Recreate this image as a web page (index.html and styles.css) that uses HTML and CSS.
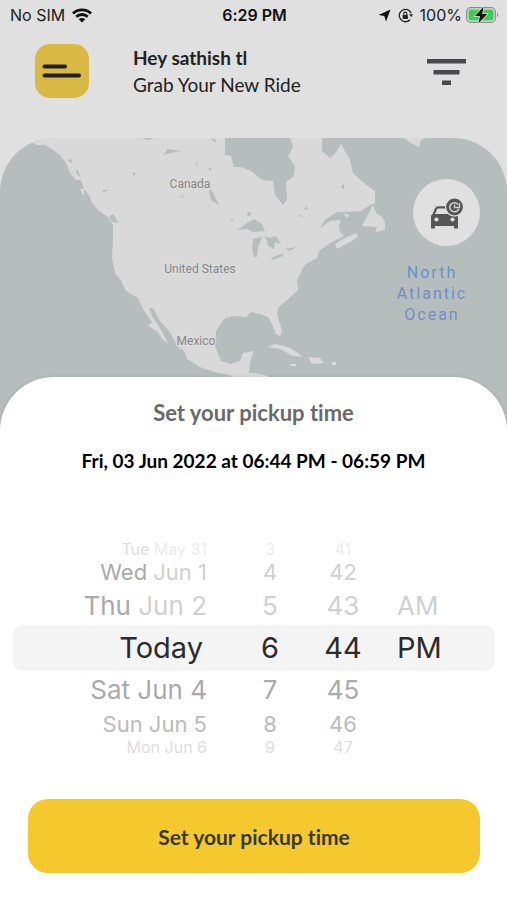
FILE: index.html
```html
<!DOCTYPE html>
<html lang="en">
<head>
    <meta charset="UTF-8">
    <meta name="viewport" content="width=device-width, initial-scale=1">
    <title>Set your pickup time</title>
    <link rel="stylesheet" href="styles.css">
</head>
<body>
<!-- status bar -->
<div class="status">
    <div class="status-left">
        <span>No SIM</span>
        <svg width="20" height="15" viewBox="0 0 20 15">
            <g fill="none" stroke="#111" stroke-width="2.8">
                <path d="M1 5.4C6 .6 14 .6 19 5.4"/>
                <path d="M4.2 8.8C7.500 5.700 12.500 5.700 15.800 8.800"/>
            </g>
            <path d="M6.700 11.200C8.500 9.500 11.500 9.500 13.300 11.200L10 14.500z" fill="#111"/>
        </svg>
    </div>
    <div class="status-time">6:29 PM</div>
    <div class="status-right">
        <svg width="13" height="13" viewBox="0 0 13 13"><path d="M12.500.5L8 12.500L6.300 6.900L.5 6z" fill="#111"/></svg>
        <svg class="lock" width="15" height="15" viewBox="0 0 15 15">
            <path d="M13.200 5.200A6.200 6.200 0 1 0 12 11.800" fill="none" stroke="#222" stroke-width="1.300"/>
            <path d="M11.200 6.300h3.800l-1.700 3z" fill="#222"/>
            <path d="M4.700 7h5.200v4H4.700z" fill="#222"/>
            <path d="M5.800 7V5.600a1.500 1.500 0 0 1 3 0V7" fill="none" stroke="#222" stroke-width="1.100"/>
        </svg>
        <span>100%</span>
        <svg class="battery" width="33" height="18" viewBox="0 0 33 18">
            <rect x=".7" y="1.700" width="28.600" height="14.600" rx="4" fill="none" stroke="#8b8b8b" stroke-width="1.200"/>
            <rect x="2.500" y="3.500" width="25" height="11" rx="2.500" fill="#3fcb5c"/>
            <path d="M31 6.500c1.600.7 1.600 4.300 0 5z" fill="#999"/>
            <path d="M17.500.8L9 10h5l-1.500 7.200L21.200 8h-5z" fill="#111" stroke="#e0e0e0" stroke-width="1.400" paint-order="stroke"/>
        </svg>
    </div>
</div>

<!-- header -->
<header class="header">
    <button type="button" class="menu-btn" aria-label="Menu">
        <svg width="40" height="14" viewBox="0 0 40 14">
            <path d="M2.500 2.500h20.500M2.500 11.500H37" stroke="#202020" stroke-width="4" stroke-linecap="round"/>
        </svg>
    </button>
    <div class="greeting">
        <h1>Hey sathish tl</h1>
        <p>Grab Your New Ride</p>
    </div>
    <button type="button" class="filter-btn" aria-label="Filter">
        <svg width="39" height="27" viewBox="0 0 39 27">
            <path d="M0 0h39v4.500H0zM6.500 11h26v4.500h-26zM15 21.500h9V26h-9z" fill="#48494d"/>
        </svg>
    </button>
</header>

<!-- map -->
<section class="map">
    <svg class="map-img" viewBox="0 138 507 292" preserveAspectRatio="xMidYMin slice">
        <g fill="#d9d9d9">
            <path d="M0 138H31V142L37 145L45 145L52 149L60 155L66 163L70 173L76 180L81 180L84 189L90 197L92 203L98 210L108 217L113 225L113 240L112 258L115 273L121 280L125 290L131 294L138 298L143 309L152 322L148 326L157 331L163 340L168 344L163 333L158 325L153 318L149 308L153 308L160 321L170 332L174 340L178 347L184 351L187 359L200 367L214 372L230 375L238 385L270 385L268 376L255 373L249 373L250 362L254 351L243 353L240 361L231 364L221 361L215 346L216 331L224 319L232 316L246 317L251 312L260 314L268 317L272 324L276 334L280 336L282 331L277 314L278 308L288 299L298 290L297 280L303 268L306 264L317 258L319 251L330 243L340 238L344 236L340 232L339 226L341 220L330 221L319 229L326 219L337 212L361 211L370 205L375 203L375 191L365 184L353 173L350 160L341 144L335 154L330 158L322 151L322 138H290L293 147L288 156L295 166L294 176L286 182L287 200L283 205L275 195L273 181L262 180L251 171L241 167L234 167L231 156L225 155V138z"/>
            <path d="M335 244L345 238L356 233L358 237L350 242L337 249z"/>
            <path d="M373 205L362 226L377 227L375 232L385 230L385 222L382 217L376 213z"/>
            <path d="M267 347L275 344L288 347L298 353L303 357L293 356L280 349zM308 357L320 358L324 363L312 364zM290 364h6v2h-6zM332 362h4v3h-4z"/>
            <path d="M404 138h22l-5 2l-2 7l-8-4zM67 160l6 0l5 11l3 4l-4 2zM80 189l4 0v8zM343 213l6 2l-2 3z"/>
        </g>
        <g fill="#b6bebd">
            <path d="M237 230L247 223L254 219L262 224L265 231L253 232L247 229z"/>
            <path d="M253 239L262 237L258 247L257 257L254 257L252 248zM264 236L270 238L276 236L281 244L275 242L274 249L268 246L267 240zM271 258L284 253L283 256L272 260zM284 249L296 247L290 251z"/>
            <path d="M163 155L168 149L181 151L171 153zM211 189L219 205L211 200L209 192zM207 202L213 212L210 208zM101 190h8l-5 2zM109 217l4-3l6 9l-7-1zM195 166l3-6l-1 6zM341 186l3-2v6zM181 197l3-3l-2 5zM298 216l6 1l-4-2zM304 209l3-3v4zM229 220l6-1l-3 2z"/>
            <circle cx="134" cy="174" r="1.500"/><circle cx="210" cy="169" r="1.500"/><circle cx="249" cy="214" r="2"/>
            <path d="M141 138h12l-4 2zM211 139h4l1 4zM67 160l4-1l2 5zM77 169l4 9l-5-5z"/>
        </g>
        <g class="place">
            <text x="190" y="188">Canada</text>
            <text x="200" y="273">United States</text>
            <text x="196" y="345">Mexico</text>
        </g>
        <g class="ocean">
            <text x="432" y="278">North</text>
            <text x="432" y="299">Atlantic</text>
            <text x="432" y="320">Ocean</text>
        </g>
    </svg>
    <button type="button" class="ride-btn" aria-label="Scheduled rides">
        <svg width="34" height="32" viewBox="0 0 34 32">
            <path d="M17 10.300H8.500Q6.500 10.300 5.900 12L3 19" fill="none" stroke="#555" stroke-width="2.200"/>
            <path d="M1 18.500L3 17H18Q21 20 28 19V31.500H24V29H5V31.500H1z" fill="#555"/>
            <circle cx="6.500" cy="22.500" r="2.100" fill="#e0e0e0"/>
            <circle cx="22.500" cy="22.500" r="2.100" fill="#e0e0e0"/>
            <circle cx="24.500" cy="10" r="9" fill="#555" stroke="#e0e0e0" stroke-width="1.200"/>
            <path d="M28.200 7.600A4.600 4.600 0 1 0 28.800 11.700" fill="none" stroke="#d0d0d0" stroke-width="1.500"/>
            <path d="M24.500 7.500V10.500H29.500V6" fill="none" stroke="#d0d0d0" stroke-width="1.300"/>
        </svg>
    </button>
</section>

<!-- pickup time sheet -->
<main class="sheet">
    <h2>Set your pickup time</h2>
    <p class="summary">Fri, 03 Jun 2022 at 06:44 PM - 06:59 PM</p>

    <div class="picker">
        <ul class="wheel wheel-date" role="listbox" aria-label="Date">
            <li class="far" role="option"><b>Tue</b> May 31</li>
            <li class="mid" role="option"><b>Wed</b> Jun 1</li>
            <li class="near" role="option"><b>Thu</b> Jun 2</li>
            <li class="current" role="option" aria-selected="true">Today</li>
            <li class="near below" role="option">Sat Jun 4</li>
            <li class="mid below" role="option">Sun Jun 5</li>
            <li class="far below" role="option">Mon Jun 6</li>
        </ul>
        <ul class="wheel" role="listbox" aria-label="Hour">
            <li class="far" role="option">3</li>
            <li class="mid" role="option">4</li>
            <li class="near" role="option">5</li>
            <li class="current" role="option" aria-selected="true">6</li>
            <li class="near below" role="option">7</li>
            <li class="mid below" role="option">8</li>
            <li class="far below" role="option">9</li>
        </ul>
        <ul class="wheel" role="listbox" aria-label="Minute">
            <li class="far" role="option">41</li>
            <li class="mid" role="option">42</li>
            <li class="near" role="option">43</li>
            <li class="current" role="option" aria-selected="true">44</li>
            <li class="near below" role="option">45</li>
            <li class="mid below" role="option">46</li>
            <li class="far below" role="option">47</li>
        </ul>
        <ul class="wheel wheel-period" role="listbox" aria-label="AM or PM">
            <li class="near" role="option">AM</li>
            <li class="current" role="option" aria-selected="true">PM</li>
        </ul>
    </div>

    <button type="button" class="submit-btn">Set your pickup time</button>
</main>
</body>
</html>
```
FILE: styles.css
```css
* {
    box-sizing: border-box;
}
body, h1, h2, p, ul {
    margin: 0;
    padding: 0;
}
body {
    background: #e0e0e0;
    font-family: "Lato", "Liberation Sans", sans-serif;
    font-variant-ligatures: none;
    color: #222;
}
button {
    border: 0;
    padding: 0;
    background: none;
    font-family: inherit;
    font-variant-ligatures: none;
    cursor: pointer;
}
svg {
    display: block;
}

/* status bar */
.status {
    display: grid;
    grid-template-columns: 1fr auto 1fr;
    align-items: center;
    height: 30px;
    padding: 0 8px 0 10px;
    font-family: "Inter", sans-serif;
    font-size: 16px;
}
.status-left, .status-right {
    display: flex;
    align-items: center;
    gap: 7px;
}
.status-right {
    justify-content: flex-end;
}
.status-time {
    font-weight: 600;
    color: #111;
}
.battery {
    margin-left: -3px;
}

/* header */
.header {
    display: flex;
    align-items: flex-start;
    padding: 14px 41px 40px 35px;
}
.menu-btn {
    display: flex;
    align-items: center;
    justify-content: center;
    width: 54px;
    height: 54px;
    border-radius: 15px;
    background: #d9b843;
}
.greeting {
    flex: 1;
    margin-left: 44px;
    line-height: 27px;
}
.greeting h1 {
    font-size: 19px;
    font-weight: 700;
}
.greeting p {
    font-size: 19px;
}
.filter-btn {
    margin-top: 15px;
}

/* map */
.map {
    position: relative;
    overflow: hidden;
    border-radius: 54px 54px 0 0;
    background: #b6bebd;
}
.map-img {
    width: 100%;
}
.place {
    font-family: "Roboto", sans-serif;
    font-size: 12px;
    fill: #858585;
    stroke: #dedede;
    stroke-width: 2px;
    paint-order: stroke;
    text-anchor: middle;
}
.ocean {
    font-family: "Roboto", sans-serif;
    font-size: 16px;
    letter-spacing: 2px;
    fill: #6b8fc9;
    text-anchor: middle;
}
.ride-btn {
    position: absolute;
    top: 41px;
    right: 27px;
    display: flex;
    align-items: center;
    justify-content: center;
    width: 67px;
    height: 67px;
    border-radius: 50%;
    background: #e0e0e0;
}

/* sheet */
.sheet {
    position: relative;
    margin-top: -53px;
    padding: 24px 0 27px;
    border-radius: 54px 54px 0 0;
    background: #fff;
    box-shadow: 0 0 4px rgba(0, 0, 0, .1);
    text-align: center;
}
.sheet h2 {
    font-size: 22px;
    line-height: 24px;
    color: #6a6a6a;
}
.summary {
    margin-top: 24px;
    font-size: 19px;
    font-weight: 700;
    line-height: 24px;
    color: #000;
}

/* wheel picker */
.picker {
    display: grid;
    grid-template-columns: 222fr 70fr 76fr 114fr;
    margin: 68px 12px 0 13px;
    font-family: "Inter", sans-serif;
}
.wheel {
    list-style: none;
}
.wheel li {
    white-space: nowrap;
    color: #d0d0d0;
}
.wheel b {
    font-weight: 400;
    color: #aaa;
}
.wheel-date li {
    padding-right: 28px;
    text-align: right;
}
.wheel-period {
    padding-top: 46px;
}
.wheel-period li {
    padding-left: 16px;
    text-align: left;
}
.wheel .near {
    font-size: 26px;
    line-height: 38px;
}
.wheel .mid {
    font-size: 22px;
    line-height: 30px;
}
.wheel .far {
    font-size: 16px;
    line-height: 16px;
    color: #ececec;
}
.wheel .far b {
    color: #ddd;
}
.wheel .current {
    background: #f4f4f4;
    font-size: 29px;
    line-height: 46px;
    color: #2b2b2b;
}
.wheel-date .current {
    padding-right: 32px;
    border-radius: 10px 0 0 10px;
}
.wheel-period .current {
    border-radius: 0 10px 10px 0;
}
.wheel .near.below {
    color: #aaa;
}
.wheel .mid.below {
    color: #bbb;
}
.wheel .far.below {
    color: #ddd;
}

.submit-btn {
    display: block;
    width: calc(100% - 55px);
    height: 74px;
    margin: 44px 27px 0 28px;
    border-radius: 20px;
    background: #f5c92e;
    font-size: 21px;
    font-weight: 700;
    color: #383a30;
}
```
